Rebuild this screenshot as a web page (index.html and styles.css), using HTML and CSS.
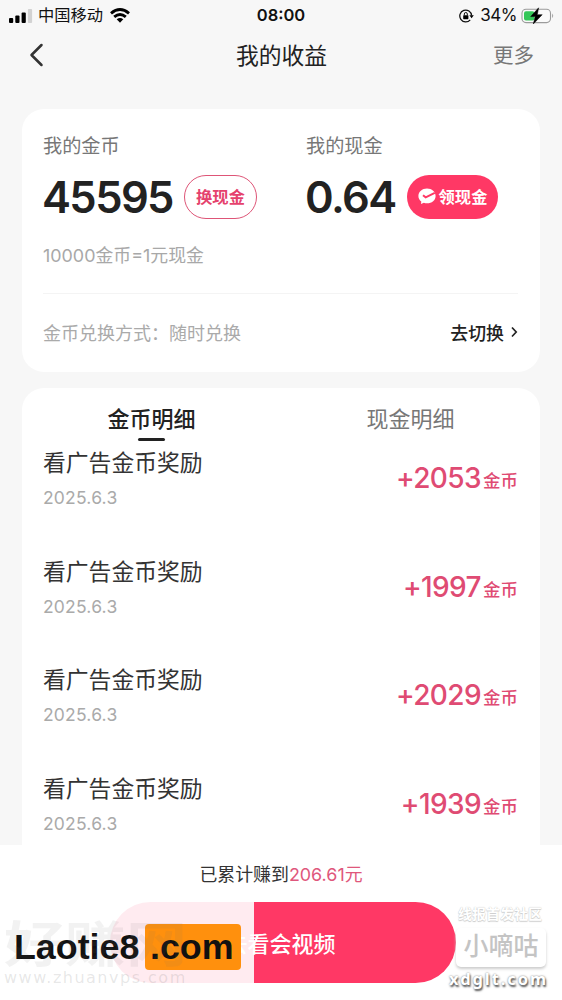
FILE: index.html
```
<!DOCTYPE html>
<html lang="zh-CN">
<head>
<meta charset="utf-8">
<title>我的收益</title>
<link rel="stylesheet" href="styles.css">
</head>
<body>
<div class="screen">
  <div class="status">
    <div class="status-left">
      <svg class="signal" width="24" height="14" viewBox="0 0 24 14"><rect x="0" y="9" width="4.2" height="5" rx="1"/><rect x="6.3" y="6.500" width="4.200" height="7.500" rx="1"/><rect x="12.600" y="3.500" width="4.200" height="10.500" rx="1"/><rect x="18.900" y="0" width="4.200" height="14" rx="1" fill="#d2d2d2"/></svg>
      <span class="carrier">中国移动</span>
      <svg class="wifi" width="20" height="15" viewBox="0 0 20 15"><g fill="none" stroke="#000" stroke-width="2.900"><path d="M1 5.400Q10-2.200 19 5.400"/><path d="M4.200 8.900Q10 4 15.800 8.900"/></g><path d="M6.700 11.300Q10 8.600 13.300 11.300L10 14.800Z"/></svg>
    </div>
    <span class="clock">08:00</span>
    <div class="status-right">
      <svg class="lock" width="15" height="14" viewBox="0 0 15 14"><path d="M11.200 10.800A5.900 5.900 0 1 1 12.600 6.500" fill="none" stroke="#111" stroke-width="1.300"/><path d="M10.400 6.300H14.800L12.600 9.200Z"/><rect x="4.200" y="6.200" width="5.200" height="4" rx=".6"/><path d="M5.300 6.500V5a1.500 1.500 0 0 1 3 0v1.500" fill="none" stroke="#111" stroke-width="1"/></svg>
      <span class="percent">34%</span>
      <svg class="battery" width="34" height="18" viewBox="0 0 34 18"><rect x="1" y="2.200" width="28.500" height="13.400" rx="4" fill="#fafafa" stroke="#9b9b9b" stroke-width="1.100"/><rect x="3" y="4.200" width="10.500" height="9.400" rx="2" fill="#35c759"/><path d="M31.200 6.500q2 2.300 0 4.600z" fill="#9b9b9b"/><path d="M17.600 .8L9.700 9.600H14.200L12.300 17L21.200 7.700H16.300Z" stroke="#000" stroke-width=".5"/></svg>
    </div>
  </div>
  <header class="nav">
    <svg class="back" width="15" height="24" viewBox="0 0 15 24"><path d="M12.500 2L2.500 12L12.500 22" fill="none" stroke="#333" stroke-width="2.500" stroke-linecap="round" stroke-linejoin="round"/></svg>
    <h1 class="title">我的收益</h1>
    <span class="more">更多</span>
  </header>

  <section class="card balance">
    <div class="accounts">
      <div class="account">
        <div class="label">我的金币</div>
        <div class="amount-row"><span class="amount">45595</span><span class="pill outline">换现金</span></div>
        <div class="rate">10000金币=1元现金</div>
      </div>
      <div class="account">
        <div class="label">我的现金</div>
        <div class="amount-row"><span class="amount cash">0.64</span><span class="pill solid"><svg width="18" height="17" viewBox="0 0 18 17"><path d="M9 .5C4.100 .5 .4 3.900 .4 8c0 2.300 1.100 4.200 2.900 5.500l-.3 2.500 2.900-1.200c1 .4 2 .5 3.100.5 4.900 0 8.600-3.300 8.600-7.400S13.900.5 9 .5Z" fill="#fff"/><path d="M5 7.200L7.700 9.400L16.800 4.800" fill="none" stroke="#ff3865" stroke-width="2"/></svg>领现金</span></div>
      </div>
    </div>
    <div class="exchange"><span class="mode">金币兑换方式：随时兑换</span><span class="switch">去切换<svg width="8" height="12" viewBox="0 0 8 12"><path d="M2 1.500L6.200 6L2 10.500" fill="none" stroke="#222" stroke-width="1.700"/></svg></span></div>
  </section>

  <section class="card details">
    <div class="tabs"><span class="tab active">金币明细</span><span class="tab">现金明细</span></div>
    <div class="list">
      <div class="item"><div><div class="name">看广告金币奖励</div><div class="date">2025.6.3</div></div><div class="gain">+2053<small>金币</small></div></div>
      <div class="item"><div><div class="name">看广告金币奖励</div><div class="date">2025.6.3</div></div><div class="gain">+1997<small>金币</small></div></div>
      <div class="item"><div><div class="name">看广告金币奖励</div><div class="date">2025.6.3</div></div><div class="gain">+2029<small>金币</small></div></div>
      <div class="item"><div><div class="name">看广告金币奖励</div><div class="date">2025.6.3</div></div><div class="gain">+1939<small>金币</small></div></div>
    </div>
  </section>

  <footer class="footer">
    <div class="total">已累计赚到<span>206.61元</span></div>
    <div class="watch">去看会视频</div>
    <div class="veil"></div>
    <div class="brand"><span>Laotie8</span><span class="brand-tld">.com</span></div>
    <div class="stamp"><span class="stamp-name">好赚网</span><span class="stamp-url">www.zhuanvps.com</span></div>
    <div class="forum"><span class="forum-top">线报首发社区</span><span class="forum-name">小嘀咕</span><span class="forum-url">xdglt.com</span></div>
  </footer>
</div>
</body>
</html>
```
FILE: styles.css
```
* { box-sizing: border-box; }
body { margin: 0; background: #f7f7f7; font-family: Inter, "Noto Sans CJK SC", sans-serif; color: #222; }
svg { display: block; flex: none; }
.screen { width: 562px; height: 1000px; display: flex; flex-direction: column; overflow: hidden; background: #f7f7f7; }
.status { height: 28px; display: grid; grid-template-columns: 1fr auto 1fr; align-items: center; padding: 0 9px; font-size: 16px; line-height: 29px; color: #111; }
.status-left, .status-right { display: flex; align-items: center; }
.status-right { justify-content: flex-end; }
.carrier { margin: 0 7px 0 5px; font-size: 16.300px; line-height: 31px; }
.clock { font-weight: 600; font-size: 16.500px; letter-spacing: 0; }
.percent { margin: 0 4px 0 6px; font-size: 17px; letter-spacing: -.5px; }
.battery { margin-right: -2px; }
.nav { height: 81px; display: grid; grid-template-columns: 1fr auto 1fr; align-items: start; padding: 10px 28px 0 29px; line-height: 35px; }
.back { margin-top: 5px; }
.title { margin: 0; font-size: 22.800px; font-weight: 400; }
.more { justify-self: end; font-size: 20.500px; line-height: 36px; color: #777; }
.card { margin: 0 22px; background: #fff; flex: none; }
.balance { height: 263px; border-radius: 22px; padding: 21px 22px 0 21px; }
.accounts { height: 164px; display: grid; grid-template-columns: 263px 1fr; border-bottom: 1px solid #f4f4f4; }
.label { font-size: 19.200px; line-height: 33px; height: 32px; color: #777; }
.amount-row { display: flex; align-items: center; height: 70px; }
.amount { width: 142px; margin-left: -1px; font-size: 43.500px; font-weight: 600; letter-spacing: -1.600px; line-height: 50px; }
.amount.cash { width: 102px; }
.pill { height: 44px; border-radius: 22px; display: flex; align-items: center; justify-content: center; font-size: 16.300px; line-height: 20px; padding-bottom: 1px; font-weight: 600; }
.outline { width: 73px; border: 1.500px solid #de5577; color: #e5426d; }
.solid { width: 91px; gap: 3px; background: #ff3865; color: #fff; }
.rate { font-size: 17.900px; line-height: 31px; margin-top: 8px; color: #a8a8a8; }
.exchange { display: flex; justify-content: space-between; align-items: center; height: 75px; }
.mode { font-size: 18px; color: #aaa; }
.switch { display: flex; align-items: center; gap: 6px; font-size: 17.900px; font-weight: 500; }
.details { margin-top: 16px; height: 457px; border-radius: 22px 22px 0 0; overflow: hidden; }
.tabs { display: grid; grid-template-columns: 1fr 1fr; height: 58px; line-height: 63px; font-size: 22px; color: #777; text-align: center; }
.active { color: #222; font-weight: 500; display: flex; flex-direction: column; align-items: center; height: 54px; }
.active::after { content: ""; width: 27px; height: 3px; flex: none; margin-top: -13px; border-radius: 2px; background: #222; }
.list { padding: 0 22px 0 21px; }
.item { height: 108.700px; display: flex; justify-content: space-between; }
.name { font-size: 22.800px; line-height: 34px; color: #333; }
.date { font-size: 17.500px; line-height: 26px; margin-top: 5px; letter-spacing: .2px; color: #aaa; }
.gain { font-size: 28px; line-height: 34px; margin-top: 15px; font-weight: 500; letter-spacing: -.6px; color: #df4b73; }
.gain small { font-size: 17.500px; letter-spacing: 0; margin-left: 2px; position: relative; top: -1px; }
.footer { position: relative; height: 155px; flex: none; background: #fff; }
.total { padding-top: 15px; line-height: 29px; height: 43px; text-align: center; font-size: 17.900px; color: #333; }
.total span { color: #df577c; }
.watch { width: 346px; height: 81px; margin: 14px 0 0 110px; padding-right: 5px; border-radius: 41px; background: #ff3865; color: #fff; text-align: center; font-size: 22px; line-height: 84px; font-weight: 500; }
.veil { position: absolute; left: 0; top: 57px; width: 254px; height: 98px; background: rgba(255,255,255,.9); }
.stamp { position: absolute; left: 4px; top: 75px; display: flex; flex-direction: column; color: rgba(110,110,110,.09); white-space: nowrap; }
.stamp-name { font-size: 61px; line-height: 50px; height: 47px; font-weight: 700; transform: scaleY(.8); }
.stamp-url { font: 16px/20px "DejaVu Sans", sans-serif; letter-spacing: 1.500px; margin-top: 1px; color: rgba(110,110,110,.17); }
.brand { position: absolute; left: 14px; top: 79px; display: flex; align-items: center; font: bold 35.800px/46px "Liberation Sans", sans-serif; color: #111; }
.brand > span:first-child { width: 131px; }
.brand-tld { width: 96px; height: 46px; padding-left: 5px; border-radius: 4px; background: #ff900d; }
.forum { position: absolute; left: 445px; top: 59px; width: 101px; display: flex; flex-direction: column; align-items: flex-end; white-space: nowrap; color: #fff; }
.forum-top { font-size: 14px; line-height: 19px; height: 18px; margin-right: 4px; font-weight: 700; text-shadow: 0 1px 1px #ccc, 0 0 1px #bbb; }
.forum-name { width: 90px; height: 39px; margin-top: 6px; border-radius: 5px; background: #fff; box-shadow: 0 2px 3px #ccc; color: #c4c4c4; text-align: center; font-size: 25px; line-height: 36px; font-weight: 500; }
.forum-url { font: bold 16.500px/24px "Noto Sans", sans-serif; letter-spacing: 1.900px; margin-right: -1.900px; text-shadow: 1px 2px 2px #555, 0 0 2px #777; }
```
